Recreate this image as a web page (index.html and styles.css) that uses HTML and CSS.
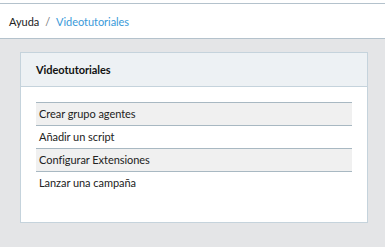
FILE: index.html
```html
<!DOCTYPE html>
<html lang="es">

<head>
    <meta charset="UTF-8">
    <meta name="viewport" content="width=device-width, initial-scale=1.0">
    <title>Videotutoriales</title>
    <link rel="stylesheet" href="styles.css">
</head>

<body>
    <header class="topbar">
        <nav class="breadcrumb">
            <span class="crumb">Ayuda</span>
            <span class="sep">/</span>
            <a class="crumb active" href="#">Videotutoriales</a>
        </nav>
    </header>

    <main class="content">
        <section class="panel">
            <div class="panel-heading">
                <h3>Videotutoriales</h3>
            </div>
            <div class="panel-body">
                <ul class="tutorial-list">
                    <li>Crear grupo agentes</li>
                    <li>Añadir un script</li>
                    <li>Configurar Extensiones</li>
                    <li>Lanzar una campaña</li>
                </ul>
            </div>
        </section>
    </main>
</body>

</html>
```

FILE: styles.css
```css
body {
    font-family: Lato, "Open Sans", sans-serif;
    font-size: 11px;
    letter-spacing: -0.05px;
    color: #222;
    background-color: #e4e5e7;
    margin: 0;
    padding: 0;
    height: 247px;
}

.topbar {
    background-color: #fff;
    border-top: 3px solid #fff;
    box-shadow: inset 0 1px 0 #b4c2cc;
    border-bottom: 1px solid #b4c2cc;
    height: 34px;
    padding: 1px 9px 0;
    display: flex;
    align-items: center;
}

.breadcrumb {
    display: flex;
    gap: 6px;
}

.sep {
    color: #777;
}

.crumb.active {
    color: #3a9ad9;
    text-decoration: none;
}

.content {
    padding: 13px 17px 0 20px;
}

.panel {
    background-color: #fff;
    border: 1px solid #c5d3dc;
}

.panel-heading {
    background-color: #edf1f4;
    border-bottom: 1px solid #c5d3dc;
    height: 33px;
    display: flex;
    align-items: center;
    padding: 0 15px;
}

.panel-heading h3 {
    margin: 0;
    font-size: 11px;
    font-weight: bold;
    color: #111;
}

.panel-body {
    padding: 15px 15px 28px;
}

.tutorial-list {
    list-style: none;
    margin: 0;
    padding: 0;
}

.tutorial-list li {
    height: 22px;
    line-height: 22px;
    padding-left: 3px;
    border-top: 1px solid #a8b8c2;
}

.tutorial-list li:nth-child(odd) {
    background-color: #f0f0f0;
}
```
